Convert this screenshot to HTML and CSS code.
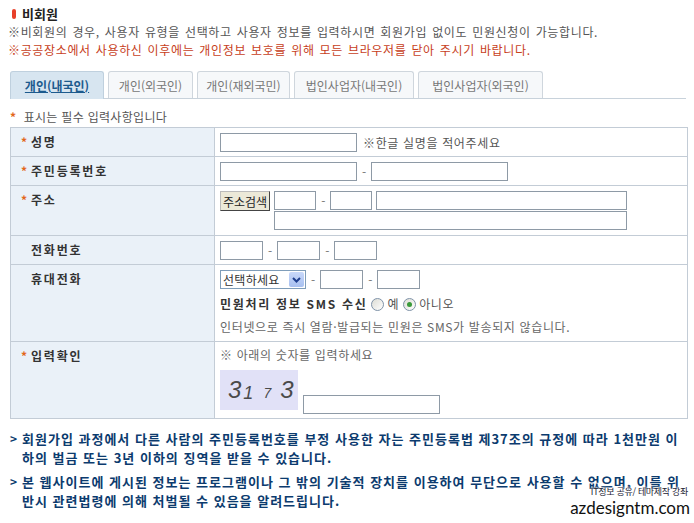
FILE: index.html
```html
<!DOCTYPE html>
<html lang="ko">
<head>
    <meta charset="UTF-8">
    <meta name="viewport" content="width=device-width, initial-scale=1.0">
    <title>비회원 민원신청</title>
    <link rel="stylesheet" href="styles.css">
</head>
<body>
    <div class="page">
        <h2 class="title"><span class="bar"></span>비회원</h2>
        <p class="note">※비회원의 경우, 사용자 유형을 선택하고 사용자 정보를 입력하시면 회원가입 없이도 민원신청이 가능합니다.</p>
        <p class="note warn">※공공장소에서 사용하신 이후에는 개인정보 보호를 위해 모든 브라우저를 닫아 주시기 바랍니다.</p>

        <ul class="tabs">
            <li class="tab active t1"><a href="#">개인(내국인)</a></li>
            <li class="tab t2"><a href="#">개인(외국인)</a></li>
            <li class="tab t3"><a href="#">개인(재외국민)</a></li>
            <li class="tab t4"><a href="#">법인사업자(내국인)</a></li>
            <li class="tab t5"><a href="#">법인사업자(외국인)</a></li>
        </ul>

        <p class="required"><span class="star">*</span> 표시는 필수 입력사항입니다</p>

        <table class="form">
            <tr>
                <th><span class="star">*</span>성명</th>
                <td>
                    <input type="text" class="w137">
                    <span class="hint">※한글 실명을 적어주세요</span>
                </td>
            </tr>
            <tr>
                <th><span class="star">*</span>주민등록번호</th>
                <td>
                    <input type="text" class="w137">
                    <span class="dash">-</span>
                    <input type="text" class="w137">
                </td>
            </tr>
            <tr>
                <th><span class="star">*</span>주소</th>
                <td>
                    <div class="addr">
                        <button type="button" class="btn-addr">주소검색</button>
                        <div class="addr-fields">
                            <div>
                                <input type="text" class="w42">
                                <span class="dash">-</span>
                                <input type="text" class="w42">
                                <input type="text" class="w251">
                            </div>
                            <div><input type="text" class="w353"></div>
                        </div>
                    </div>
                </td>
            </tr>
            <tr>
                <th><span class="star blank">*</span>전화번호</th>
                <td>
                    <input type="text" class="w43">
                    <span class="dash">-</span>
                    <input type="text" class="w43">
                    <span class="dash">-</span>
                    <input type="text" class="w43">
                </td>
            </tr>
            <tr>
                <th><span class="star blank">*</span>휴대전화</th>
                <td>
                    <div class="line">
                        <span class="select">
                            <span class="select-text">선택하세요</span>
                            <span class="select-btn">
                                <svg width="9" height="6" viewBox="0 0 9 6"><path d="M1 1 L4.5 4.5 L8 1" fill="none" stroke="#1f3f8f" stroke-width="2"/></svg>
                            </span>
                        </span>
                        <span class="dash">-</span>
                        <input type="text" class="w43">
                        <span class="dash">-</span>
                        <input type="text" class="w43">
                    </div>
                    <div class="sms">
                        <strong>민원처리 정보 SMS 수신</strong>
                        <label><span class="radio"></span>예</label>
                        <label><span class="radio checked"></span>아니오</label>
                    </div>
                    <div class="info">인터넷으로 즉시 열람·발급되는 민원은 SMS가 발송되지 않습니다.</div>
                </td>
            </tr>
            <tr>
                <th><span class="star">*</span>입력확인</th>
                <td>
                    <div class="info top">※ 아래의 숫자를 입력하세요</div>
                    <div class="captcha-row">
                        <div class="captcha">
                            <span class="d1">3</span><span class="d2">1</span><span class="d3">7</span><span class="d4">3</span>
                        </div>
                        <input type="text" class="w137">
                    </div>
                </td>
            </tr>
        </table>

        <div class="notice">
            <div class="item">
                <span class="mark">&gt;</span>
                <p>회원가입 과정에서 다른 사람의 주민등록번호를 부정 사용한 자는 주민등록법 제37조의 규정에 따라 1천만원 이<br>하의 벌금 또는 3년 이하의 징역을 받을 수 있습니다.</p>
            </div>
            <div class="item">
                <span class="mark">&gt;</span>
                <p>본 웹사이트에 게시된 정보는 프로그램이나 그 밖의 기술적 장치를 이용하여 무단으로 사용할 수 없으며, 이를 위<br>반시 관련법령에 의해 처벌될 수 있음을 알려드립니다.</p>
            </div>
        </div>

        <div class="watermark">
            <span class="wm-small">IT정보 공유/ 테마제작 강좌</span>
            <span class="wm-big">azdesigntm.com</span>
        </div>
    </div>
</body>
</html>
```

FILE: styles.css
```css
body {
    margin: 0;
    background-color: #fff;
    font-family: "Noto Sans CJK KR", "Liberation Sans", sans-serif;
    font-size: 12px;
    color: #555;
    letter-spacing: 0.65px;
}

.page {
    position: relative;
    width: 694px;
    height: 523px;
    padding: 0 8px;
    box-sizing: border-box;
    overflow: hidden;
}

.title {
    margin: 5px 0 0 4px;
    font-size: 13px;
    line-height: 18px;
    color: #222;
    letter-spacing: 0;
    display: flex;
    align-items: center;
}

.title .bar {
    display: inline-block;
    width: 4px;
    height: 10px;
    margin-right: 6px;
    border-radius: 2px;
    background-color: #e8402a;
}

.note {
    margin: 0;
    line-height: 18px;
    word-spacing: 1px;
}

.note.warn {
    color: #c7401b;
}

.tabs {
    list-style: none;
    margin: 12px 0 0 2px;
    padding: 0;
    display: flex;
    gap: 4px;
    border-bottom: 1px solid #c8d2db;
}

.tab a {
    display: block;
    height: 27px;
    line-height: 27px;
    box-sizing: border-box;
    border: 1px solid #cfd6dd;
    border-bottom: none;
    border-radius: 3px 3px 0 0;
    background-color: #f6f8fa;
    color: #777;
    text-align: center;
    text-decoration: none;
    letter-spacing: 0;
}

.t1 a { width: 94px; }
.t2 a { width: 85px; }
.t3 a { width: 93px; }
.t4 a { width: 120px; }
.t5 a { width: 125px; }

.tab.active a {
    height: 28px;
    margin-bottom: -1px;
    background-color: #d7e5f0;
    border-color: #bfd0de;
    color: #1c5a8d;
    font-weight: bold;
    text-decoration: underline;
}

.required {
    margin: 9px 0 0 2px;
    line-height: 18px;
    color: #555;
    letter-spacing: 0.3px;
}

.star {
    color: #e2661c;
    font-weight: bold;
    display: inline-block;
    width: 10px;
}

.star.blank {
    visibility: hidden;
}

.form {
    margin: 1px 0 0 2px;
    width: 678px;
    border-collapse: collapse;
}

.form th,
.form td {
    border: 1px solid #c3ccd6;
    vertical-align: top;
}

.form th {
    width: 183px;
    padding: 6px 10px;
    background-color: #eaf1f8;
    text-align: left;
    color: #333;
    font-weight: bold;
    letter-spacing: 1.8px;
    line-height: 16px;
}

.form td {
    padding: 5px 5px 4px;
    line-height: 19px;
}

input[type="text"] {
    height: 19px;
    margin: 0;
    padding: 0 2px;
    border: 1px solid #8e9aa6;
    box-sizing: border-box;
    vertical-align: top;
    font-size: 12px;
}

.w137 { width: 137px; }
.w42 { width: 42px; }
.w43 { width: 43px; }
.w251 { width: 251px; }
.w353 { width: 353px; }

.dash {
    display: inline-block;
    margin: 0 1px;
    color: #777;
    letter-spacing: 0;
}

.hint {
    margin-left: 2px;
    color: #555;
}

.addr {
    display: flex;
    gap: 4px;
}

.btn-addr {
    height: 20px;
    padding: 0 2px;
    margin: 0;
    border: 1px solid #444;
    border-color: #bbb #444 #444 #bbb;
    background-color: #ece9d8;
    font-family: inherit;
    font-size: 12px;
    color: #222;
}

.addr-fields div {
    height: 20px;
}

.select {
    display: inline-flex;
    align-items: center;
    width: 86px;
    height: 19px;
    box-sizing: border-box;
    border: 1px solid #7f9db9;
    vertical-align: top;
    background-color: #fff;
}

.select-text {
    flex: 1;
    padding-left: 2px;
    color: #333;
    letter-spacing: 0.3px;
}

.select-btn {
    width: 15px;
    height: 15px;
    margin-right: 1px;
    border-radius: 2px;
    background: linear-gradient(#c8d8fa, #a8c0f0);
    display: flex;
    align-items: center;
    justify-content: center;
}

.sms {
    margin-top: 5px;
    line-height: 20px;
    display: flex;
    align-items: center;
    gap: 4px;
    color: #555;
}

.sms strong {
    color: #333;
    letter-spacing: 1.7px;
}

.sms label {
    display: inline-flex;
    align-items: center;
    gap: 3px;
}

.radio {
    display: inline-block;
    width: 11px;
    height: 11px;
    border: 1px solid #7f93a9;
    border-radius: 50%;
    background: linear-gradient(135deg, #dcdcd4, #fff);
    position: relative;
}

.radio.checked::after {
    content: "";
    position: absolute;
    left: 3px;
    top: 3px;
    width: 5px;
    height: 5px;
    border-radius: 50%;
    background-color: #3a9a3a;
}

.info {
    margin-top: 3px;
    line-height: 20px;
    color: #666;
}

.info.top {
    margin-top: 0;
    line-height: 16px;
}

.captcha-row {
    display: flex;
    gap: 5px;
    height: 44px;
    margin-top: 7px;
}

.captcha {
    width: 78px;
    height: 40px;
    background-color: #e1e1f7;
    font-family: "Liberation Sans", sans-serif;
    font-style: italic;
    color: #4a4a4a;
    letter-spacing: 0;
    line-height: 1;
    display: flex;
    align-items: flex-start;
    padding: 8px 0 0 8px;
    box-sizing: border-box;
}

.captcha .d1 { font-size: 24px; }
.captcha .d2 { font-size: 18px; margin: 6px 0 0 2px; }
.captcha .d3 { font-size: 14px; margin: 8px 0 0 10px; }
.captcha .d4 { font-size: 24px; margin-left: 9px; }

.captcha-row input {
    align-self: flex-end;
}

.notice {
    margin-top: 10px;
}

.item {
    display: flex;
    margin-bottom: 5px;
}

.item .mark {
    width: 12px;
    padding-left: 2px;
    font-weight: bold;
    color: #0c3b6e;
    line-height: 19px;
    letter-spacing: 0;
}

.item p {
    margin: 0;
    font-size: 13px;
    font-weight: bold;
    color: #0c3b6e;
    letter-spacing: 1px;
    line-height: 19px;
}

.watermark {
    position: absolute;
    right: 4px;
    bottom: 5px;
    display: flex;
    flex-direction: column;
    align-items: flex-end;
    letter-spacing: 0;
    text-shadow: 0 0 2px #fff, 0 0 2px #fff, 0 0 3px #fff;
}

.wm-small {
    font-size: 9px;
    line-height: 12px;
    color: #223;
    margin-right: 2px;
    letter-spacing: -0.3px;
}

.wm-big {
    font-family: "Lato", sans-serif;
    font-size: 17px;
    line-height: 20px;
    color: #111;
}
```
